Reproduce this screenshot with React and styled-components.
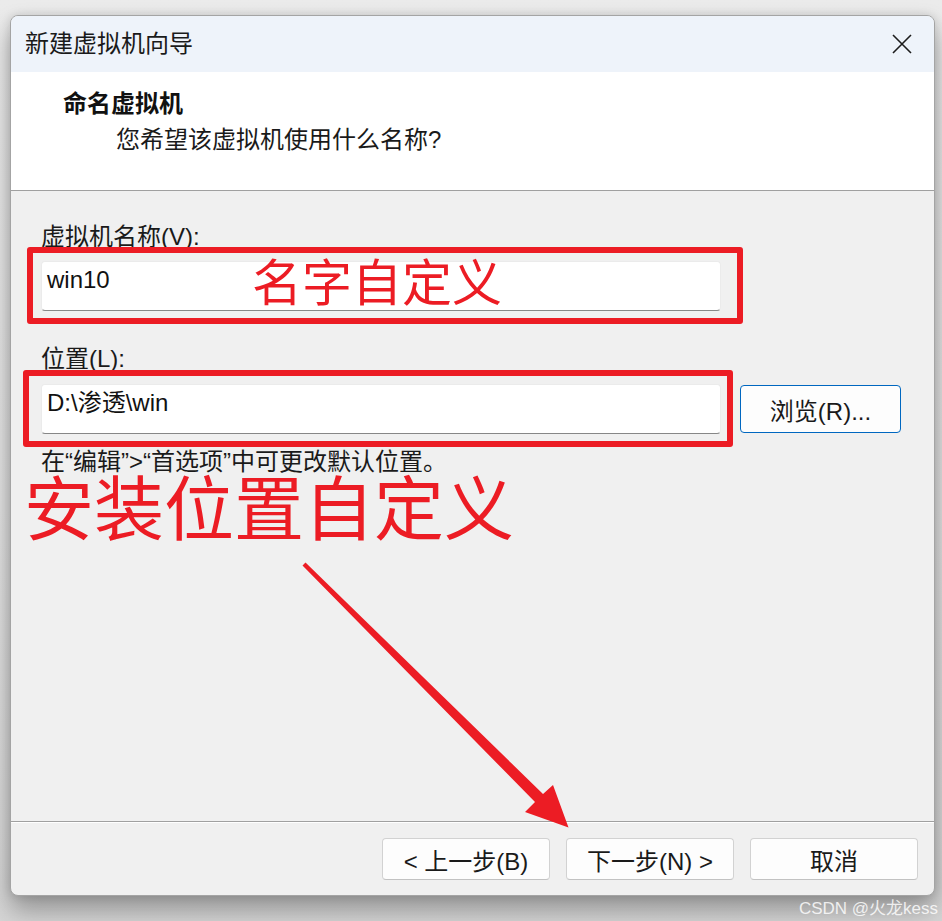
import React from "react";
import styled, { createGlobalStyle } from "styled-components";

const GlobalStyle = createGlobalStyle`
  html, body { margin: 0; padding: 0; }
  body {
    background: #e2e2e2;
    font-family: "Liberation Sans", "Noto Sans CJK SC", sans-serif;
    color: #1a1a1a;
  }
  * { box-sizing: border-box; }
`;

const Stage = styled.div`
  position: relative;
  width: 942px;
  height: 921px;
  overflow: hidden;
  padding: 15px 0 0 10px;
  background: linear-gradient(180deg, #ebebeb 0%, #e3e3e3 55%, #d6d6d6 100%);
`;

const Window = styled.div`
  width: 925px;
  height: 881px;
  border: 1px solid #a4a4a4;
  border-radius: 8px;
  overflow: hidden;
  display: flex;
  flex-direction: column;
  background: #f0f0f0;
  box-shadow: 0 14px 26px rgba(0, 0, 0, 0.32), 0 0 10px rgba(0, 0, 0, 0.12);
`;

const TitleBar = styled.div`
  height: 56px;
  flex: none;
  background: #eef3fa;
  display: flex;
  align-items: center;
  justify-content: space-between;
  padding: 0 22px 0 14px;
`;

const TitleText = styled.div`
  font-size: 24px;
  line-height: 30px;
  color: #1a1a1a;
`;

const CloseButton = styled.div`
  width: 20px;
  height: 20px;
  display: flex;
`;

const Header = styled.div`
  height: 119px;
  flex: none;
  background: #ffffff;
  border-bottom: 1px solid #a0a0a0;
  padding: 17px 0 0 52px;
`;

const HeaderTitle = styled.div`
  font-size: 24px;
  line-height: 30px;
  font-weight: 700;
  color: #111;
`;

const HeaderSub = styled.div`
  font-size: 24px;
  line-height: 30px;
  margin: 6px 0 0 53px;
  color: #1a1a1a;
`;

const Body = styled.div`
  flex: 1;
  padding: 31px 32px 0 30px;
  display: flex;
  flex-direction: column;
  align-items: flex-start;
`;

const FieldLabel = styled.div`
  font-size: 24px;
  line-height: 30px;
  color: #1a1a1a;
  margin-top: ${(p) => p.$gap || 0}px;
`;

const FieldRow = styled.div`
  display: flex;
  align-items: center;
  margin-top: ${(p) => p.$gap || 0}px;
`;

const InputWrap = styled.div`
  position: relative;
  width: 680px;
  height: 50px;
`;

const TextBox = styled.div`
  width: 100%;
  height: 100%;
  background: #ffffff;
  border: 1px solid #ebebeb;
  border-bottom: 1px solid #878787;
  border-radius: 4px;
  padding: 3px 5px 0;
  font-size: 24px;
  line-height: 30px;
  color: #111;
  white-space: nowrap;
`;

const RedBox = styled.div`
  position: absolute;
  top: ${(p) => p.$t}px;
  left: ${(p) => p.$l}px;
  right: ${(p) => p.$r}px;
  bottom: ${(p) => p.$b}px;
  border: 6px solid #ec1c24;
  border-radius: 3px;
  pointer-events: none;
`;

const RedNote = styled.div`
  position: absolute;
  left: ${(p) => p.$l}px;
  top: ${(p) => p.$t}px;
  font-family: "Noto Sans CJK SC", sans-serif;
  font-size: ${(p) => p.$size}px;
  line-height: ${(p) => p.$lh || "1"};
  color: #ec1c24;
  white-space: nowrap;
  pointer-events: none;
`;

const BrowseButton = styled.button`
  width: 161px;
  height: 48px;
  margin-left: 19px;
  background: #fdfdfd;
  border: 1px solid #0067c0;
  border-radius: 4px;
  font-family: "Liberation Sans", "Noto Sans CJK SC", sans-serif;
  font-size: 24px;
  color: #1a1a1a;
  padding: 0;
  display: flex;
  align-items: center;
  justify-content: center;
`;

const Hint = styled.div`
  font-size: 24px;
  line-height: 30px;
  margin-top: 13px;
  color: #1a1a1a;
`;

const Footer = styled.div`
  height: 74px;
  flex: none;
  border-top: 1px solid #a0a0a0;
  box-shadow: inset 0 1px 0 #ffffff;
  padding: 16px 16px 0 0;
  display: flex;
  justify-content: flex-end;
  gap: 16px;
`;

const WizardButton = styled.button`
  width: 168px;
  height: 42px;
  background: #fdfdfd;
  border: 1px solid #d2d2d2;
  border-bottom-color: #c2c2c2;
  border-radius: 4px;
  font-family: "Liberation Sans", "Noto Sans CJK SC", sans-serif;
  font-size: 24px;
  color: #1a1a1a;
  padding: 0;
  display: flex;
  align-items: center;
  justify-content: center;
  white-space: pre;
`;

const ArrowLayer = styled.svg`
  position: absolute;
  left: 0;
  top: 0;
  pointer-events: none;
`;

const Watermark = styled.div`
  position: absolute;
  right: 4px;
  bottom: 2px;
  font-family: "Liberation Sans", "Noto Sans CJK SC", sans-serif;
  font-size: 17px;
  line-height: 20px;
  color: rgba(255, 255, 255, 0.82);
  white-space: nowrap;
`;

export default function App() {
  return (
    <>
      <GlobalStyle />
      <Stage>
        <Window>
          <TitleBar>
            <TitleText>新建虚拟机向导</TitleText>
            <CloseButton>
              <svg width="20" height="20" viewBox="0 0 20 20">
                <path d="M1 1 L19 19 M19 1 L1 19" stroke="#1c1c1c" strokeWidth="1.6" fill="none" />
              </svg>
            </CloseButton>
          </TitleBar>
          <Header>
            <HeaderTitle>命名虚拟机</HeaderTitle>
            <HeaderSub>您希望该虚拟机使用什么名称?</HeaderSub>
          </Header>
          <Body>
            <FieldLabel>虚拟机名称(V):</FieldLabel>
            <FieldRow $gap={9}>
              <InputWrap>
                <TextBox>win10</TextBox>
                <RedBox $t={-14} $l={-14} $r={-22} $b={-13} />
                <RedNote $l={211} $t={-7} $size={50}>名字自定义</RedNote>
              </InputWrap>
            </FieldRow>
            <FieldLabel $gap={33}>位置(L):</FieldLabel>
            <FieldRow $gap={10}>
              <InputWrap>
                <TextBox>D:\渗透\win</TextBox>
                <RedBox $t={-14} $l={-18} $r={-12} $b={-13} />
              </InputWrap>
              <BrowseButton>浏览(R)...</BrowseButton>
            </FieldRow>
            <Hint>在“编辑”&gt;“首选项”中可更改默认位置。</Hint>
          </Body>
          <Footer>
            <WizardButton>{"< 上一步(B)"}</WizardButton>
            <WizardButton>{"下一步(N) >"}</WizardButton>
            <WizardButton>取消</WizardButton>
          </Footer>
        </Window>
        <RedNote $l={24} $t={477} $size={70} $lh="56px">安装位置自定义</RedNote>
        <ArrowLayer width="942" height="921" viewBox="0 0 942 921">
          <polygon
            points="305.5,562.5 543,794 553,785 568.5,827.5 525,812 535,802 302.5,565.5"
            fill="#ec1c24"
          />
        </ArrowLayer>
        <Watermark>CSDN @火龙kess</Watermark>
      </Stage>
    </>
  );
}
